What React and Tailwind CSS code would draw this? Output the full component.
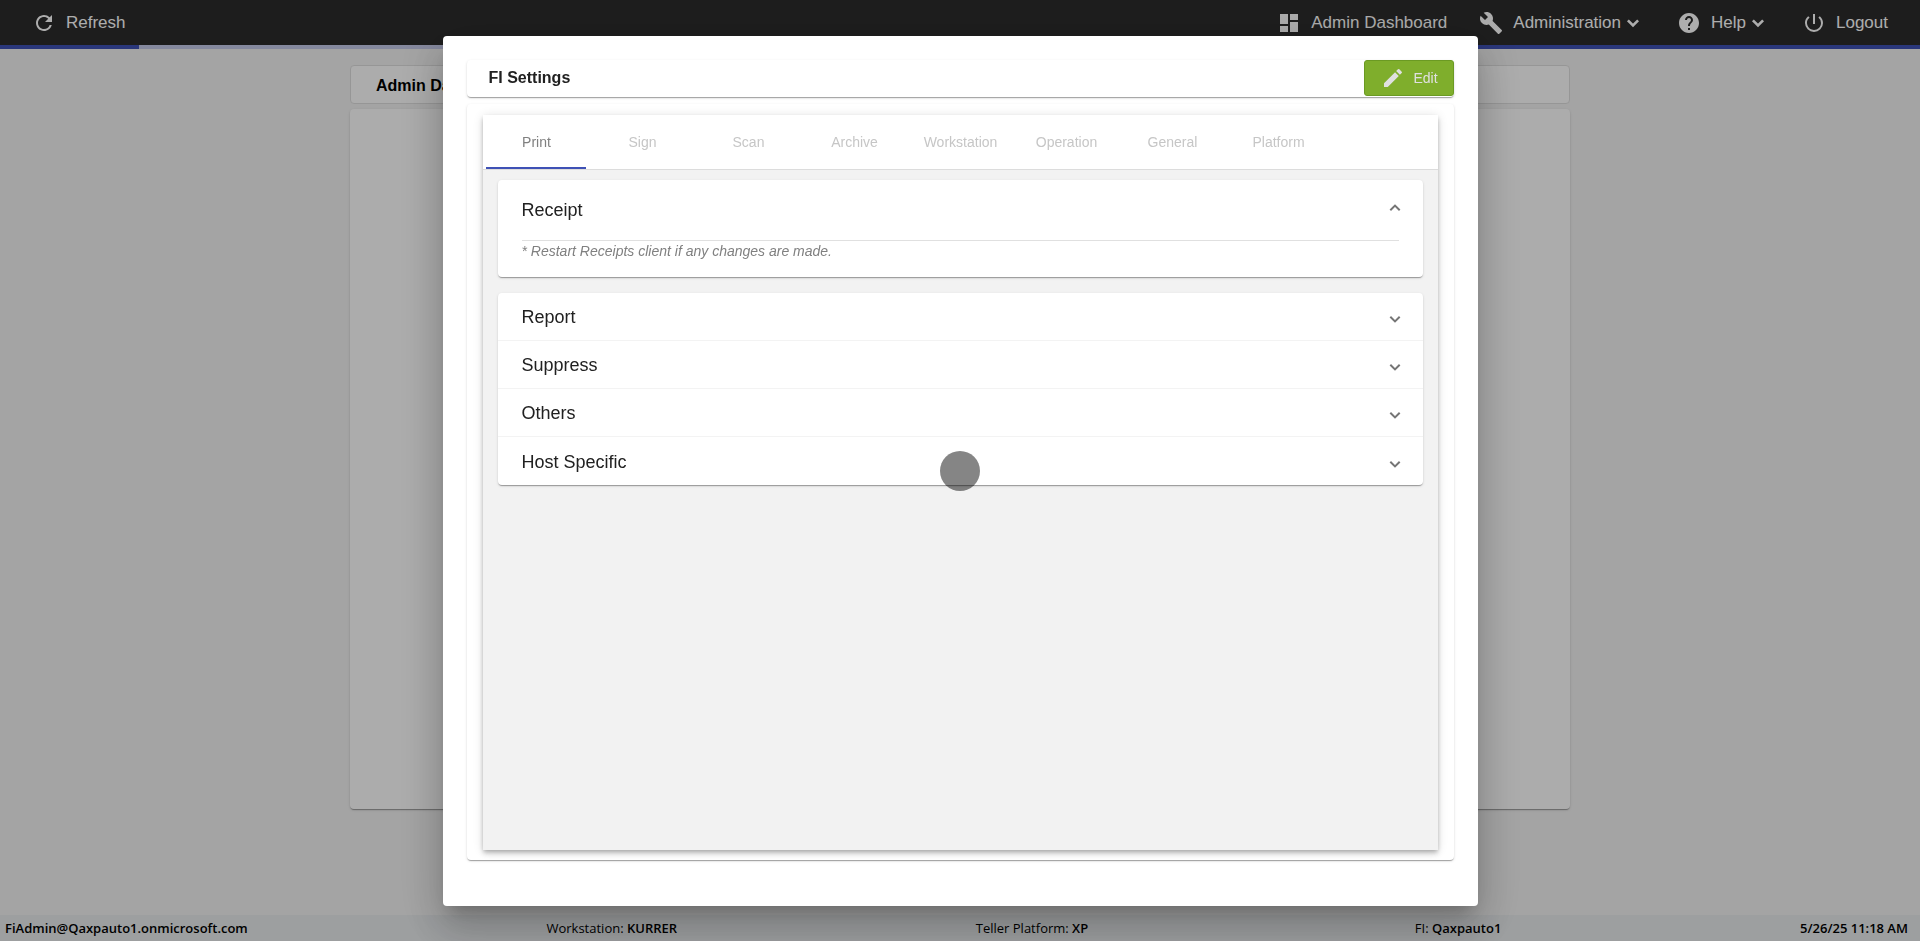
import { useState } from 'react';
import {
  MdRefresh,
  MdDashboard,
  MdBuild,
  MdHelp,
  MdPowerSettingsNew,
  MdEdit,
} from 'react-icons/md';

const tabs = ['Print', 'Sign', 'Scan', 'Archive', 'Workstation', 'Operation', 'General', 'Platform'];

const sections = ['Report', 'Suppress', 'Others', 'Host Specific'];

const navItems = [
  { name: 'Admin Dashboard', icon: MdDashboard },
  { name: 'Administration', icon: MdBuild, menu: true },
  { name: 'Help', icon: MdHelp, menu: true },
  { name: 'Logout', icon: MdPowerSettingsNew },
];

const cardShadow =
  'shadow-[0_2px_1px_-1px_rgba(0,0,0,0.2),0_1px_1px_0_rgba(0,0,0,0.14),0_1px_3px_0_rgba(0,0,0,0.12)]';

function Chevron({ up }) {
  return (
    <svg
      className="-mr-0.5"
      width="12"
      height="8"
      viewBox="0 0 12 8"
      fill="none"
      stroke="#757575"
      strokeWidth="2"
      aria-hidden="true"
    >
      <path d={up ? 'M1.3 6.3 6 1.6 10.7 6.3' : 'M1.3 1.7 6 6.4 10.7 1.7'} />
    </svg>
  );
}

function MenuArrow() {
  return (
    <svg width="24" height="24" viewBox="0 0 24 24" fill="none" stroke="currentColor" strokeWidth="2.6" aria-hidden="true">
      <path d="M6.9 9.4 12 14.5 17.1 9.4" />
    </svg>
  );
}

function NavButton({ item }) {
  return (
    <button className="flex items-center whitespace-nowrap">
      <item.icon size={24} />
      <span className="ml-[10px]">{item.name}</span>
      {item.menu && <MenuArrow />}
    </button>
  );
}

function Header() {
  return (
    <header>
      <nav className="flex h-[45px] items-center justify-between bg-[#2c2c2c] px-8 text-[17px] text-white">
        <NavButton item={{ name: 'Refresh', icon: MdRefresh }} />
        <div className="flex items-center gap-8">
          {navItems.map((item) => (
            <NavButton key={item.name} item={item} />
          ))}
        </div>
      </nav>
      {/* Loading bar */}
      <div className="flex h-1 bg-[#c5cae9]">
        <div className="w-[139px] bg-[#3f51b5]" />
        <div className="ml-auto w-1/4 bg-[#3f51b5]" />
      </div>
    </header>
  );
}

function Footer() {
  return (
    <footer className="flex h-[26px] items-center justify-between bg-[#e7eaec] pt-0.5 pr-3 pl-[5px] font-['Open_Sans','Noto_Sans',sans-serif] text-[13px] text-black">
      <b className="font-semibold">FiAdmin@Qaxpauto1.onmicrosoft.com</b>
      <span>Workstation: <b className="font-semibold">KURRER</b></span>
      <span className="pr-7">Teller Platform: <b className="font-semibold">XP</b></span>
      <span>FI: <b className="font-semibold">Qaxpauto1</b></span>
      <b className="font-semibold">5/26/25 11:18 AM</b>
    </footer>
  );
}

function SettingsDialog() {
  const [active, setActive] = useState('Print');

  return (
    <div
      role="dialog"
      aria-label="FI Settings"
      className="flex h-[870px] max-h-full w-11/12 max-w-[1035px] flex-col rounded bg-white px-6 pt-6 pb-[46px] text-[#212121] shadow-[0_11px_15px_-7px_rgba(0,0,0,0.2),0_24px_38px_3px_rgba(0,0,0,0.14),0_9px_46px_8px_rgba(0,0,0,0.12)]"
    >
      <div className={`flex h-[37px] shrink-0 items-start justify-between rounded bg-white ${cardShadow}`}>
        <h2 className="pl-[22px] text-base leading-9 font-bold">FI Settings</h2>
        <button className="flex h-9 w-[90px] items-center justify-center gap-2 rounded-[3px] border border-[#6b9a23] bg-[#7fae2c] pl-0.5 text-sm text-[#e0e0e0]">
          <MdEdit size={24} />
          Edit
        </button>
      </div>

      <div className={`mt-[7px] flex min-h-0 flex-1 flex-col rounded bg-white px-4 pt-[11px] pb-[10px] ${cardShadow}`}>
        <div className="flex flex-1 flex-col bg-[#f2f2f2] shadow-[0_2px_4px_-1px_rgba(0,0,0,0.2),0_4px_5px_0_rgba(0,0,0,0.14),0_1px_10px_0_rgba(0,0,0,0.12)]">
          <div role="tablist" className="flex h-[55px] gap-1.5 border-b border-[#dcdcdc] bg-white pl-[3px]">
            {tabs.map((tab) => (
              <button
                key={tab}
                role="tab"
                aria-selected={tab === active}
                onClick={() => setActive(tab)}
                className={`w-[100px] border-b-2 pt-0.5 pl-0.5 text-sm ${
                  tab === active ? 'border-[#3f51b5] text-[#808080]' : 'border-transparent text-[#c6c6c6]'
                }`}
              >
                {tab}
              </button>
            ))}
          </div>

          <div className="flex flex-col gap-4 px-[15px] pt-[10px]">
            <section className={`h-[97px] rounded bg-white px-6 ${cardShadow}`}>
              <button className="flex h-[61px] w-full items-center justify-between border-b border-[#e0e0e0] text-lg">
                Receipt
                <span className="pb-1"><Chevron up /></span>
              </button>
              <p className="text-sm leading-5 text-[#808080] italic">
                * Restart Receipts client if any changes are made.
              </p>
            </section>

            <section className={`divide-y divide-[#f3f3f3] rounded bg-white ${cardShadow}`}>
              {sections.map((name) => (
                <button key={name} className="flex h-12 w-full items-center justify-between px-6 pt-0.5 text-lg">
                  {name}
                  <span className="pt-1"><Chevron /></span>
                </button>
              ))}
            </section>
          </div>
        </div>
      </div>
    </div>
  );
}

export default function App() {
  return (
    <div className="flex min-h-screen flex-col bg-[#f2f2f2] font-['Liberation_Sans',Arial,sans-serif]">
      <Header />
      <main className="mx-auto flex w-full max-w-[1220px] flex-1 flex-col pt-4 pb-[106px]">
        <h1 className="h-[39px] rounded border border-[#dedede] bg-[#fefefe] px-[25px] text-base leading-[39px] font-bold text-black">
          Admin Dashboard
        </h1>
        <div className={`mt-[5px] flex-1 rounded bg-[#fefefe] ${cardShadow}`} />
      </main>
      <Footer />

      <div className="fixed inset-0 flex items-center justify-center bg-black/32">
        <SettingsDialog />
      </div>

      {/* Busy indicator */}
      <div className="pointer-events-none fixed inset-0 flex items-center justify-center">
        <div className="size-10 rounded-full bg-black/48" />
      </div>
    </div>
  );
}
